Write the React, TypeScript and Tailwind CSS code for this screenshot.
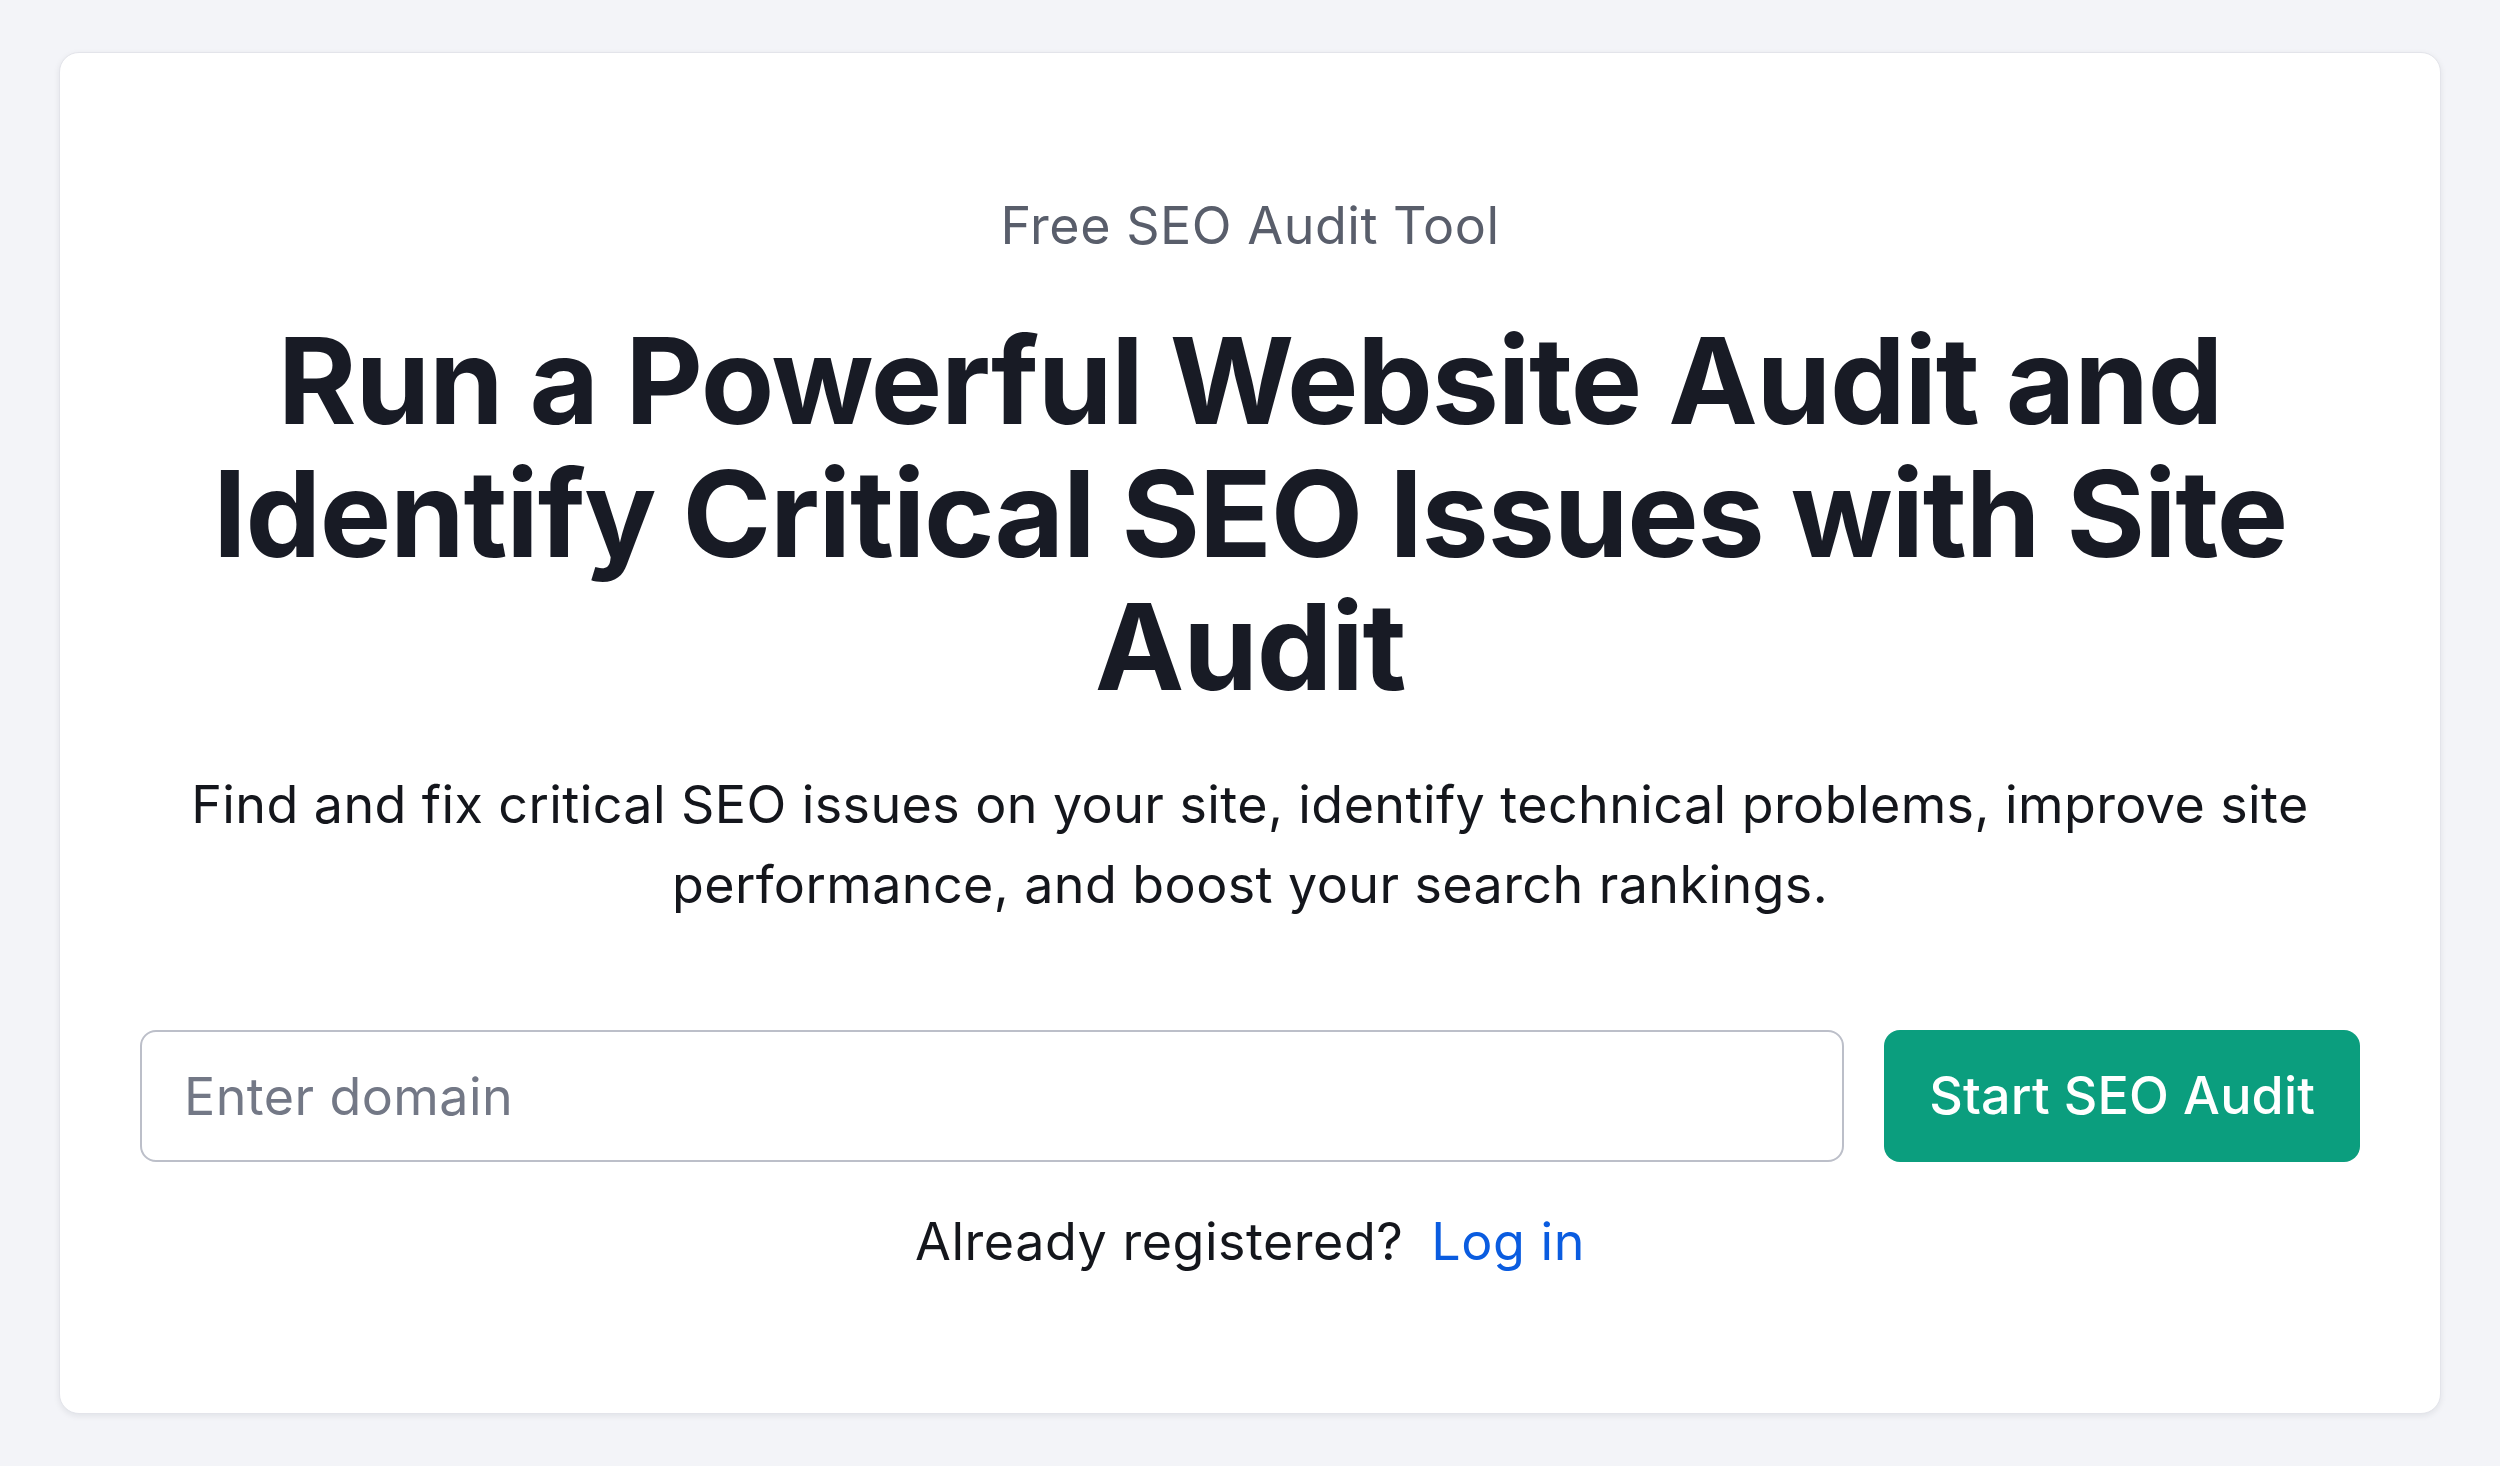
import { useState } from 'react';

export default function App() {
  const [domain, setDomain] = useState('');

  return (
    <div
      className="min-h-screen bg-[#f3f4f8] px-[59px] pt-[52px] pb-[54px]"
      style={{ fontFamily: 'Inter, "Noto Sans", sans-serif' }}
    >
      <div className="rounded-[20px] border border-[#e3e4ea] bg-white px-[80px] pt-[134px] pb-[132px] shadow-[0_2px_6px_rgba(17,24,39,0.08)]">
        <p className="text-center text-[52px] leading-[78px] tracking-[0.01em] text-[#595e6b]">Free SEO Audit Tool</p>

        <h1 className="mt-[49px] text-center text-[120px] font-bold leading-[133px] tracking-[-0.01em] text-[#181b25]">
          Run a Powerful Website Audit and Identify Critical SEO Issues with Site Audit
        </h1>

        <p className="mt-[52px] text-center text-[52px] leading-[80px] tracking-[0.008em] text-[#14161c]">
          Find and fix critical SEO issues on your site, identify technical problems, improve site performance, and boost
          your search rankings.
        </p>

        {/* Domain form */}
        <form
          className="mt-[105px] flex gap-[40px]"
          onSubmit={(e) => {
            e.preventDefault();
          }}
        >
          <input
            type="text"
            value={domain}
            onChange={(e) => setDomain(e.target.value)}
            placeholder="Enter domain"
            className="h-[132px] min-w-0 flex-1 rounded-[16px] border-2 border-[#bcbfc9] bg-white pl-[42px] pr-[42px] text-[52px] tracking-[0.008em] text-[#14161c] outline-none placeholder:text-[#737886]"
          />
          <button
            type="submit"
            className="h-[132px] shrink-0 rounded-[16px] bg-[#0b9e7e] px-[45px] text-[52px] font-medium tracking-[0.003em] text-white"
          >
            Start SEO Audit
          </button>
        </form>

        <p className="mt-[41px] text-center text-[52px] leading-[78px] tracking-[0.01em] text-[#14161c]">
          Already registered?
          <a href="#" className="ml-[28px] text-[#0a5ce0]">
            Log in
          </a>
        </p>
      </div>
    </div>
  );
}
